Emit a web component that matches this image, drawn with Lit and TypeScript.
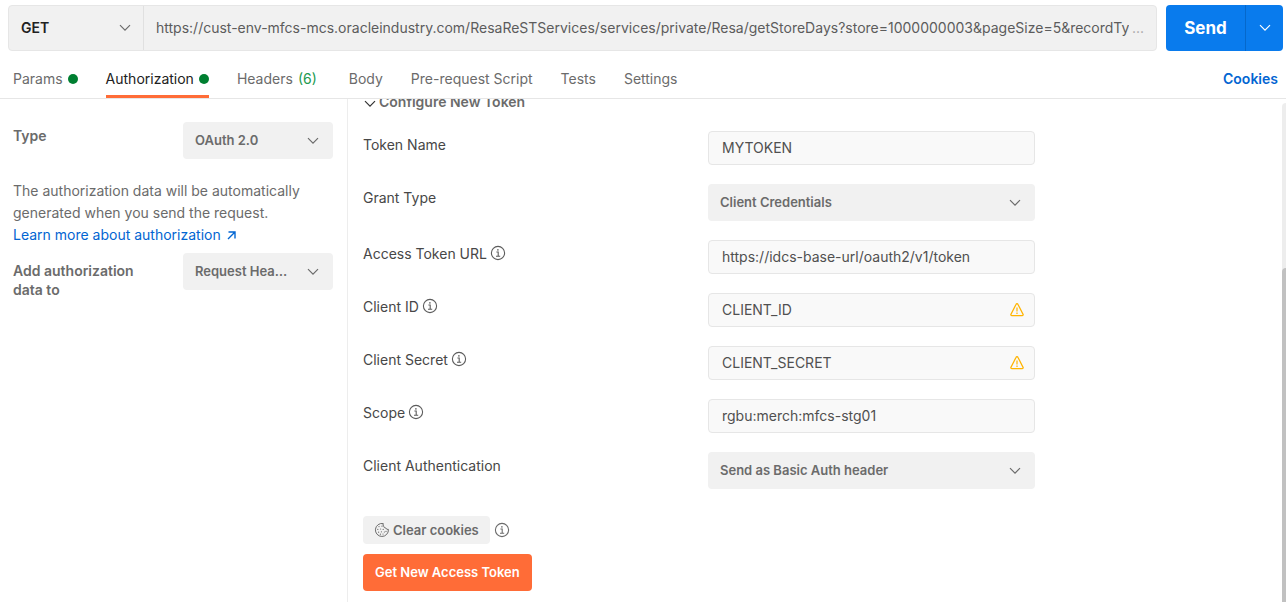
import { LitElement, html, css, svg, nothing } from "lit";
import { customElement, property } from "lit/decorators.js";

const chevron = html`<svg class="chevron" width="12" height="8" viewBox="0 0 12 8" fill="none" stroke="currentColor" stroke-width="1.2" aria-hidden="true"><path d="M1 1.2 6 6.2 11 1.2" /></svg>`;

const info = html`<svg class="info" width="16" height="16" viewBox="0 0 16 16" fill="none" stroke="currentColor" aria-hidden="true">
  <circle cx="8" cy="8" r="6.6" stroke-width="1.1" />
  <path d="M6.4 7h1.8v4M6 11.2h4.2" stroke-width="1.1" />
  <circle cx="7.9" cy="4.9" r=".8" fill="currentColor" stroke="none" />
</svg>`;

const warning = html`<svg class="warn" width="16" height="16" viewBox="0 0 16 16" fill="none" stroke="#ffb400" aria-hidden="true">
  <path d="M7.1 2.3a1 1 0 0 1 1.8 0l5.1 9.9a1 1 0 0 1-.9 1.5H2.9a1 1 0 0 1-.9-1.5z" stroke-width="1.3" stroke-linejoin="round" />
  <path d="M8 5.6v3.9M8 10.6v1.3" stroke-width="1.2" />
</svg>`;

const crumbs = [[5, 4.6], [8, 4.2], [3.8, 7.4], [6.6, 7], [9.2, 7.4], [4.6, 10.2], [7.4, 9.8], [10.4, 10], [6.4, 12.2], [9, 12], [12, 9.4]];

const cookie = html`<svg width="16" height="16" viewBox="0 0 16 16" fill="none" stroke="currentColor" aria-hidden="true">
  <path d="M9.3 1.6A6.5 6.5 0 1 0 14.4 7.4 2.2 2.2 0 0 1 11.8 6 2.3 2.3 0 0 1 9.6 4.2 2.4 2.4 0 0 1 9.3 1.6z" stroke-width="1" stroke-linejoin="round" />
  ${crumbs.map(([x, y]) => svg`<circle cx=${x} cy=${y} r=".6" fill="currentColor" stroke="none" />`)}
</svg>`;

const shared = css`
  * { box-sizing: border-box; }
  button, input, select { font: inherit; color: inherit; margin: 0; border: 0; padding: 0; background: none; border-radius: 0; outline: 0; }
  button { cursor: pointer; }
  svg { display: block; flex: none; }
  .picker { display: grid; align-items: center; min-width: 0; height: 37px; border-radius: 4px; background: #f1f1f1; color: #6b6b6b; font-size: 13px; font-weight: 600; }
  .picker > * { grid-area: 1 / 1; }
  .picker select { appearance: none; width: 100%; height: 100%; padding: 0 40px 1px 12px; overflow: hidden; text-overflow: ellipsis; white-space: nowrap; }
  .picker .chevron { justify-self: end; margin-right: 14px; pointer-events: none; }
`;

type Field = { id: string; label: string; value: string; kind?: "select"; info?: boolean; warn?: boolean };

@customElement("token-field")
class TokenField extends LitElement {
  @property({ attribute: false }) field!: Field;

  static styles = [shared, css`
    :host { display: grid; grid-template-columns: 345px minmax(0, 327px); align-items: start; }
    .label { display: flex; gap: 3px; padding-top: 4px; line-height: 20px; color: #474747; }
    .info { margin-top: 1px; color: #5c5c5c; }
    .box { display: flex; align-items: center; height: 34px; padding: 0 9px 0 13px; border: 1px solid #e6e6e6; border-radius: 4px; background: #f9f9f9; color: #505050; }
    .box input { flex: 1; min-width: 0; }
  `];

  render() {
    const f = this.field;
    return html`
      <label class="label" for=${f.id}>${f.label}${f.info ? info : nothing}</label>
      ${f.kind === "select"
        ? html`<div class="picker"><select id=${f.id}><option>${f.value}</option></select>${chevron}</div>`
        : html`<div class="box"><input id=${f.id} type="text" .value=${f.value} />${f.warn ? warning : nothing}</div>`}
    `;
  }
}

@customElement("app-root")
class AppRoot extends LitElement {
  static styles = [shared, css`
    :host { display: flex; flex-direction: column; height: 100vh; overflow: hidden; background: #fff; color: #6b6b6b; font: 14px/20px Inter, sans-serif; }
    .request { display: flex; gap: 9px; padding: 5px 3px 0 8px; }
    .bar { display: flex; flex: 1; min-width: 0; height: 46px; border: 1px solid #e6e6e6; border-radius: 4px; background: #f1f1f1; }
    .method { display: grid; align-items: center; width: 135px; border-right: 1px solid #e0e0e0; color: #212121; font-weight: 600; }
    .method > * { grid-area: 1 / 1; }
    .method select { appearance: none; width: 100%; height: 100%; padding-left: 12px; }
    .method .chevron { justify-self: end; margin-right: 12px; color: #6b6b6b; pointer-events: none; }
    .url { flex: 1; min-width: 0; padding-left: 12px; color: #5c5c5c; }
    .more { align-self: center; padding: 0 12px 0 3px; color: #a6a6a6; }
    .send { display: flex; border-radius: 4px; background: #097bed; color: #fff; overflow: hidden; }
    .send-main { width: 79px; font-size: 17px; font-weight: 700; }
    .send-more { display: flex; align-items: center; justify-content: center; width: 38px; border-left: 1px solid #0568cb; }
    .tabs { display: flex; gap: 28px; align-items: stretch; height: 48px; padding: 0 8px 0 13px; border-bottom: 1px solid #e6e6e6; }
    .tab { display: flex; align-items: center; gap: 5px; padding-top: 18px; padding-bottom: 6px; border-bottom: 3px solid transparent; white-space: nowrap; }
    .active { border-bottom-color: #ff6c37; color: #212121; }
    .counted { padding-right: 4px; }
    .dot { width: 10px; height: 10px; border-radius: 50%; background: #007f31; }
    .count { color: #229a4f; }
    .cookies { margin-left: auto; color: #0265d2; font-weight: 600; }
    .main { display: flex; flex: 1; min-height: 0; }
    .side { width: 348px; flex: none; padding: 23px 14px 0 13px; border-right: 1px solid #ededed; }
    .setting { display: grid; grid-template-columns: 1fr 150px; align-items: start; }
    .setting label { padding-top: 4px; line-height: 19px; font-weight: 600; }
    .setting .data { padding-top: 8px; padding-right: 40px; }
    .note { margin: 21px 0 7px; line-height: 22px; }
    .learn { display: inline-flex; align-items: center; gap: 6px; color: #0265d2; text-decoration: none; }
    .config { flex: 1; min-width: 0; padding-left: 15px; overflow: hidden; }
    .heading { display: flex; align-items: center; gap: 3px; margin: -7px 0 19px 1px; line-height: 20px; font-weight: 600; }
    .heading .chevron { color: #333; margin-top: 4px; }
    .fields { display: flex; flex-direction: column; gap: 19px; }
    .clear-row { display: flex; align-items: center; gap: 4px; margin: 27px 0 10px; }
    .clear { display: flex; align-items: center; gap: 3px; height: 28px; padding: 0 11px; border-radius: 4px; background: #f1f1f1; font-size: 13px; font-weight: 600; }
    .get { height: 37px; padding: 0 12px 2px; border-radius: 4px; background: #ff6c37; color: #fff; font-size: 13px; font-weight: 600; }
    .track { display: flex; flex-direction: column; justify-content: flex-end; width: 4px; margin-top: 4px; border-radius: 4px 0 0 0; background: #ededed; }
    .thumb { height: 67%; border-radius: 4px 0 0 0; background: #c1c1c1; }
  `];

  fields: Field[] = [
    { id: "token-name", label: "Token Name", value: "MYTOKEN" },
    { id: "grant-type", label: "Grant Type", value: "Client Credentials", kind: "select" },
    { id: "token-url", label: "Access Token URL", value: "https://idcs-base-url/oauth2/v1/token", info: true },
    { id: "client-id", label: "Client ID", value: "CLIENT_ID", info: true, warn: true },
    { id: "client-secret", label: "Client Secret", value: "CLIENT_SECRET", info: true, warn: true },
    { id: "scope", label: "Scope", value: "rgbu:merch:mfcs-stg01", info: true },
    { id: "client-auth", label: "Client Authentication", value: "Send as Basic Auth header", kind: "select" },
  ];

  render() {
    return html`
      <div class="request">
        <div class="bar">
          <div class="method"><select aria-label="Method"><option>GET</option></select>${chevron}</div>
          <input class="url" type="text" aria-label="Request URL" .value=${"https://cust-env-mfcs-mcs.oracleindustry.com/ResaReSTServices/services/private/Resa/getStoreDays?store=1000000003&pageSize=5&recordTy"} />
          <span class="more">...</span>
        </div>
        <div class="send">
          <button class="send-main">Send</button>
          <button class="send-more" aria-label="Send options">${chevron}</button>
        </div>
      </div>
      <nav class="tabs">
        <button class="tab">Params<span class="dot"></span></button>
        <button class="tab active">Authorization<span class="dot"></span></button>
        <button class="tab counted">Headers <span class="count">(6)</span></button>
        <button class="tab">Body</button>
        <button class="tab">Pre-request Script</button>
        <button class="tab">Tests</button>
        <button class="tab">Settings</button>
        <button class="tab cookies">Cookies</button>
      </nav>
      <div class="main">
        <aside class="side">
          <div class="setting">
            <label for="type">Type</label>
            <div class="picker"><select id="type"><option>OAuth 2.0</option></select>${chevron}</div>
          </div>
          <p class="note">
            The authorization data will be automatically generated when you send the request.
            <a class="learn" href="#">Learn more about authorization
              <svg width="9" height="9" viewBox="0 0 9 9" fill="none" stroke="currentColor" stroke-width="1.4" aria-hidden="true"><path d="M1.5 1H8v6.5M8 1 1 8" /></svg></a>
          </p>
          <div class="setting">
            <label class="data" for="target">Add authorization data to</label>
            <div class="picker"><select id="target"><option>Request Headers</option></select>${chevron}</div>
          </div>
        </aside>
        <section class="config">
          <button class="heading">${chevron}Configure New Token</button>
          <div class="fields">${this.fields.map((f) => html`<token-field .field=${f}></token-field>`)}</div>
          <div class="clear-row"><button class="clear">${cookie}Clear cookies</button>${info}</div>
          <button class="get">Get New Access Token</button>
        </section>
        <div class="track"><div class="thumb"></div></div>
      </div>
    `;
  }
}
